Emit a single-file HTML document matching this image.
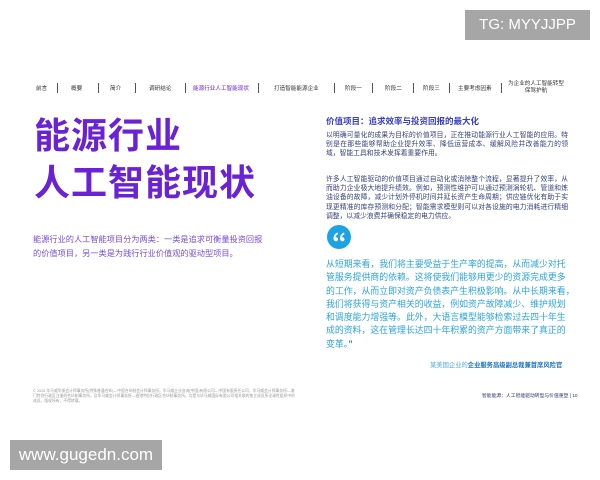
<!DOCTYPE html>
<html><head><meta charset="utf-8"><style>
html,body{margin:0;padding:0;background:#fff;}
body{width:600px;height:480px;position:relative;overflow:hidden;font-family:"Liberation Sans","Noto Sans CJK SC",sans-serif;}
.a{position:absolute;white-space:nowrap;}
.nav{font-size:5.6px;color:#333;top:84px;}
.sep{position:absolute;top:83px;width:0.8px;height:10px;background:#555;}
.t{font-weight:bold;color:#6a22d4;font-size:36px;line-height:36px;letter-spacing:1px;}
.p{font-size:6.8px;line-height:9.2px;color:#34427e;width:242px;white-space:normal;text-align:justify;}
.q{font-size:8.9px;line-height:13.3px;color:#2ba4de;}
</style></head><body>
<div class="a" style="left:465px;top:10px;width:125px;height:30px;background:#a6a6a6;color:#fff;font-size:15px;line-height:30px;text-align:center;">TG: MYYJJPP</div>

<div class="a nav" style="left:36px">前言</div><div class="sep" style="left:57px"></div>
<div class="a nav" style="left:71px">概要</div><div class="sep" style="left:98px"></div>
<div class="a nav" style="left:110px">简介</div><div class="sep" style="left:135px"></div>
<div class="a nav" style="left:149px">调研结论</div><div class="sep" style="left:185px"></div>
<div class="a nav" style="left:193px;color:#6a22d4">能源行业人工智能现状</div><div class="sep" style="left:258px"></div>
<div class="a nav" style="left:274px">打造智能能源企业</div><div class="sep" style="left:334px"></div>
<div class="a nav" style="left:345px">阶段一</div><div class="sep" style="left:372px"></div>
<div class="a nav" style="left:385px">阶段二</div><div class="sep" style="left:413px"></div>
<div class="a nav" style="left:423px">阶段三</div><div class="sep" style="left:449px"></div>
<div class="a nav" style="left:458px">主要考虑因素</div><div class="sep" style="left:501px"></div>
<div class="a nav" style="left:508px;top:81px;text-align:center;line-height:7px">为企业的人工智能转型<br>保驾护航</div>

<div class="a t" style="left:34px;top:118px">能源行业</div>
<div class="a t" style="left:34px;top:165px">人工智能现状</div>
<div class="a" style="left:33px;top:233px;font-size:8.2px;line-height:14px;color:#7a4cd6">能源行业的人工智能项目分为两类：一类是追求可衡量投资回报<br>的价值项目，另一类是为践行行业价值观的驱动型项目。</div>

<div class="a" style="left:33px;top:389px;font-size:3.8px;line-height:5px;color:#999;width:262px;white-space:normal">© 2025 毕马威华振会计师事务所(特殊普通合伙)—中国合伙制会计师事务所，毕马威企业咨询(中国)有限公司—中国有限责任公司，毕马威会计师事务所—澳门特别行政区注册的合伙制事务所，及毕马威会计师事务所—香港特别行政区合伙制事务所，均是与毕马威国际有限公司相关联的独立成员所全球性组织中的成员。版权所有，不得转载。</div>

<div class="a" style="left:326px;top:115px;font-size:8.5px;font-weight:bold;color:#3a3fc0">价值项目：追求效率与投资回报的最大化</div>
<div class="a p" style="left:326px;top:131px">以明确可量化的成果为目标的价值项目，正在推动能源行业人工智能的应用。特别是在那些能够帮助企业提升效率、降低运营成本、缓解风险并改善能力的领域，智能工具和技术发挥着重要作用。</div>
<div class="a p" style="left:326px;top:175px">许多人工智能驱动的价值项目通过自动化或消除整个流程，显著提升了效率，从而助力企业极大地提升绩效。例如，预测性维护可以通过预测涡轮机、管道和炼油设备的故障，减少计划外停机时间并延长资产生命周期；供应链优化有助于实现更精准的库存预测和分配；智能需求模型则可以对各设施的电力消耗进行精细调整，以减少浪费并确保稳定的电力供应。</div>

<svg class="a" style="left:327px;top:225px" width="24" height="24" viewBox="0 0 24 24"><circle cx="12" cy="12" r="12" fill="#1ba3e6"/><path d="M10.5 7.5c-2.5 1-4 3-4 5.8 0 1.8 1 3 2.4 3 1.2 0 2.1-.9 2.1-2.1s-.9-2-2-2c-.2 0-.4 0-.5.1.2-1.4 1.1-2.5 2.6-3.2z M17 7.5c-2.5 1-4 3-4 5.8 0 1.8 1 3 2.4 3 1.2 0 2.1-.9 2.1-2.1s-.9-2-2-2c-.2 0-.4 0-.5.1.2-1.4 1.1-2.5 2.6-3.2z" fill="#fff"/></svg>

<div class="a q" style="left:326px;top:258px">从短期来看，我们将主要受益于生产率的提高，从而减少对托<br>管服务提供商的依赖。这将使我们能够用更少的资源完成更多<br>的工作，从而立即对资产负债表产生积极影响。从中长期来看，<br>我们将获得与资产相关的收益，例如资产故障减少、维护规划<br>和调度能力增强等。此外，大语言模型能够检索过去四十年生<br>成的资料，这在管理长达四十年积累的资产方面带来了真正的<br>变革。<b style="color:#1a7fc0">”</b></div>
<div class="a" style="left:430px;top:360px;font-size:6.3px;color:#4aa8dc">某美国企业的<b style="color:#1a74c0">企业服务高级副总裁兼首席风险官</b></div>
<div class="a" style="left:482px;top:392px;font-size:4.8px;color:#2a3570">智能能源：人工智能驱动转型与价值重塑 | 10</div>

<div class="a" style="left:10px;top:440px;width:152px;height:30px;background:#a6a6a6;color:#fff;font-size:17px;line-height:30px;text-align:center;">www.gugedn.com</div>
</body></html>
